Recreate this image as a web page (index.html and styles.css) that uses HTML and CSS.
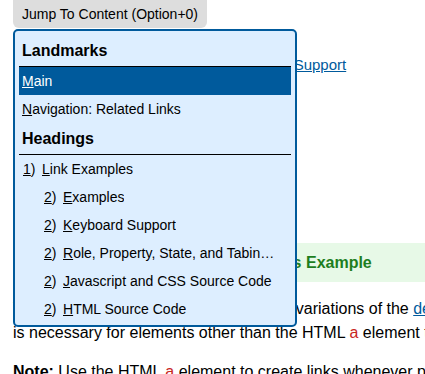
FILE: index.html
```html
<!DOCTYPE html>
<html lang="en">
  <head>
    <meta charset="UTF-8" />
    <meta name="viewport" content="width=device-width, initial-scale=1.0" />
    <title>Link Examples</title>
    <link rel="stylesheet" href="styles.css">
  </head>
  <body>
    <div class="page">
      <p class="support-line">
        <a href="#support">Browser and Assistive Technology Support</a>
      </p>

      <div class="notice">
        <h2 class="notice-title">Important Note About Use of This Example</h2>
      </div>

      <p class="text">
        The following link examples show three variations of the <a href="#pattern">design pattern</a> in which the link role<br>
        is necessary for elements other than the HTML <code>a</code> element to be recognized as links.
      </p>

      <p class="text">
        <strong>Note:</strong> Use the HTML <code>a</code> element to create links whenever possible.
      </p>
    </div>

    <div class="skipto">
      <button class="skipto-button">Jump To Content (Option+0)</button>
      <div class="skipto-menu" role="menu">
        <div class="group-label">Landmarks</div>
        <div class="menu-item active" role="menuitem">
          <span class="label"><u>M</u>ain</span>
        </div>
        <div class="menu-item" role="menuitem">
          <span class="label"><u>N</u>avigation: Related Links</span>
        </div>

        <div class="group-label">Headings</div>
        <div class="menu-item level-1" role="menuitem">
          <span class="level"><u>1</u>)</span><span class="label"><u>L</u>ink Examples</span>
        </div>
        <div class="menu-item level-2" role="menuitem">
          <span class="level"><u>2</u>)</span><span class="label"><u>E</u>xamples</span>
        </div>
        <div class="menu-item level-2" role="menuitem">
          <span class="level"><u>2</u>)</span><span class="label"><u>K</u>eyboard Support</span>
        </div>
        <div class="menu-item level-2" role="menuitem">
          <span class="level"><u>2</u>)</span><span class="label"><u>R</u>ole, Property, State, and Tabindex Attributes</span>
        </div>
        <div class="menu-item level-2" role="menuitem">
          <span class="level"><u>2</u>)</span><span class="label"><u>J</u>avascript and CSS Source Code</span>
        </div>
        <div class="menu-item level-2" role="menuitem">
          <span class="level"><u>2</u>)</span><span class="label"><u>H</u>TML Source Code</span>
        </div>
      </div>
    </div>
  </body>
</html>
```

FILE: styles.css
```css
body {
  font-family: "Liberation Sans", Arial, sans-serif;
  margin: 0;
  padding: 0;
  background-color: white;
  color: black;
  overflow: hidden;
}

a {
  color: #005a9c;
}

.page {
  width: 700px;
  padding: 0 13px;
}

.support-line {
  margin: 0;
  padding-top: 55px;
  font-size: 15px;
  line-height: 20px;
  padding-left: 50px;
}

.notice {
  margin-top: 168px;
  background-color: #e7f9e7;
}

.notice-title {
  margin: 0;
  height: 39px;
  line-height: 39px;
  padding-left: 34px;
  font-size: 16px;
  color: #1e7e1e;
}

.text {
  margin: 15px 0 0;
  font-size: 16px;
  line-height: 24px;
  white-space: nowrap;
}

.text code {
  font-family: inherit;
  color: #c8261e;
}

/* skip to menu */

.skipto {
  position: absolute;
  top: 0;
  left: 13px;
}

.skipto-button {
  display: block;
  height: 28px;
  width: 194px;
  padding: 0 9px;
  border: none;
  border-radius: 0 0 6px 6px;
  background-color: #dddddd;
  color: black;
  font-family: inherit;
  font-size: 14px;
  text-align: left;
}

.skipto-menu {
  margin-top: 1px;
  width: 272px;
  padding: 4px 4px 2px;
  border: 2px solid #005a9c;
  border-radius: 5px;
  background-color: #ddeeff;
  font-size: 14px;
}

.group-label {
  padding: 6px 3px 5px;
  line-height: 20px;
  font-size: 16px;
  font-weight: bold;
  border-bottom: 1px solid black;
}

.menu-item {
  display: flex;
  height: 28px;
  line-height: 28px;
  padding: 0 13px 0 3px;
  white-space: nowrap;
}

.menu-item.active {
  background-color: #005a9c;
  color: white;
}

.menu-item .label {
  overflow: hidden;
  text-overflow: ellipsis;
}

.menu-item .level {
  flex-shrink: 0;
  width: 19px;
}

.level-1 {
  padding-left: 4px;
}

.level-2 {
  padding-left: 25px;
}
```
